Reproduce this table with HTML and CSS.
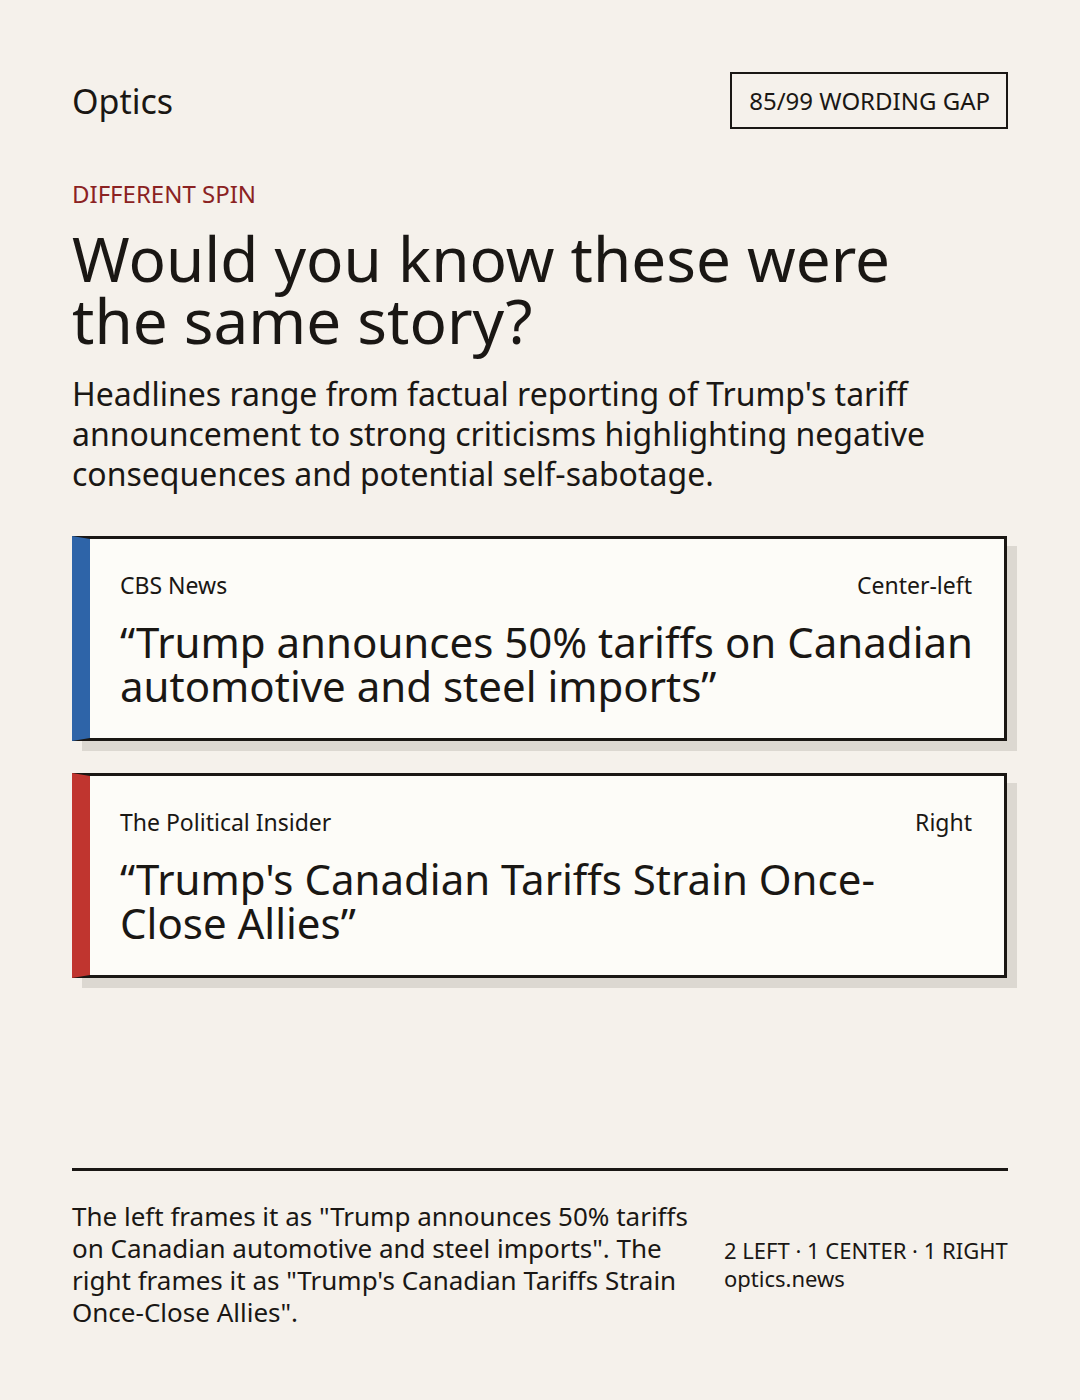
FILE: index.html
```html
<!DOCTYPE html>
<html lang="en">
<head>
<meta charset="utf-8">
<title>Optics — Different Spin</title>
<link rel="stylesheet" href="styles.css">
</head>
<body>
<main class="page">
  <header class="masthead">
    <div class="brand">Optics</div>
    <div class="badge">85/99 WORDING GAP</div>
  </header>

  <section class="intro">
    <div class="kicker">DIFFERENT SPIN</div>
    <h1 class="title">Would you know these were the same story?</h1>
    <p class="dek">Headlines range from factual reporting of Trump's tariff announcement to strong criticisms highlighting negative consequences and potential self-sabotage.</p>
  </section>

  <section class="cards">
    <article class="card card-left">
      <div class="card-meta">
        <span class="source">CBS News</span>
        <span class="lean">Center-left</span>
      </div>
      <p class="headline">“Trump announces 50% tariffs on Canadian automotive and steel imports”</p>
    </article>
    <article class="card card-right">
      <div class="card-meta">
        <span class="source">The Political Insider</span>
        <span class="lean">Right</span>
      </div>
      <p class="headline">“Trump's Canadian Tariffs Strain Once-Close Allies”</p>
    </article>
  </section>

  <footer class="footer">
    <p class="summary">The left frames it as "Trump announces 50% tariffs on Canadian automotive and steel imports". The right frames it as "Trump's Canadian Tariffs Strain Once-Close Allies".</p>
    <div class="meta">
      <div class="counts">2 LEFT · 1 CENTER · 1 RIGHT</div>
      <div class="site">optics.news</div>
    </div>
  </footer>
</main>
</body>
</html>
```

FILE: styles.css
```css
* {
  box-sizing: border-box;
}

html, body {
  margin: 0;
  padding: 0;
  background: #f5f1eb;
}

body {
  font-family: "Noto Sans", "Open Sans", "DejaVu Sans", sans-serif;
  color: #1a1714;
}

.page {
  width: 1080px;
  min-height: 1400px;
  padding: 72px;
  display: flex;
  flex-direction: column;
}

.masthead {
  display: flex;
  justify-content: space-between;
  align-items: center;
}

.brand {
  font-size: 34px;
  line-height: 44px;
}

.badge {
  border: 2px solid #1a1714;
  padding: 12px 16px 12px 17px;
  font-size: 24px;
  line-height: 29px;
}

.intro {
  margin-top: 50px;
}

.kicker {
  color: #8b2222;
  font-size: 24px;
  line-height: 30px;
}

.title {
  margin: 18px 0 0 0;
  max-width: 880px;
  font-weight: 400;
  font-size: 62px;
  line-height: 62px;
}

.dek {
  margin: 23px 0 0 0;
  max-width: 900px;
  font-size: 32px;
  line-height: 40px;
}

.cards {
  margin-top: 42px;
  display: flex;
  flex-direction: column;
  gap: 32px;
  padding-right: 1px;
}

.card {
  background: #fdfcf8;
  border: 3px solid #1a1714;
  border-left: 18px solid #2e64a8;
  box-shadow: 10px 10px 0 #dcd8d1;
  padding: 31px 26px 30px 30px;
}

.card-left {
  border-left-color: #2e64a8;
}

.card-right {
  border-left-color: #c0352f;
}

.card-meta {
  display: flex;
  justify-content: space-between;
  align-items: baseline;
  margin-right: 6px;
  font-size: 23px;
  line-height: 30px;
}

.headline {
  margin: 20px 0 0 0;
  font-size: 42px;
  line-height: 44px;
}

.footer {
  margin-top: auto;
  border-top: 3px solid #1a1714;
  padding-top: 29px;
  display: flex;
  align-items: center;
  gap: 32px;
}

.summary {
  margin: 0;
  flex: 0 0 620px;
  font-size: 26px;
  line-height: 32px;
}

.meta {
  font-size: 22px;
  line-height: 28px;
  white-space: nowrap;
}
```
